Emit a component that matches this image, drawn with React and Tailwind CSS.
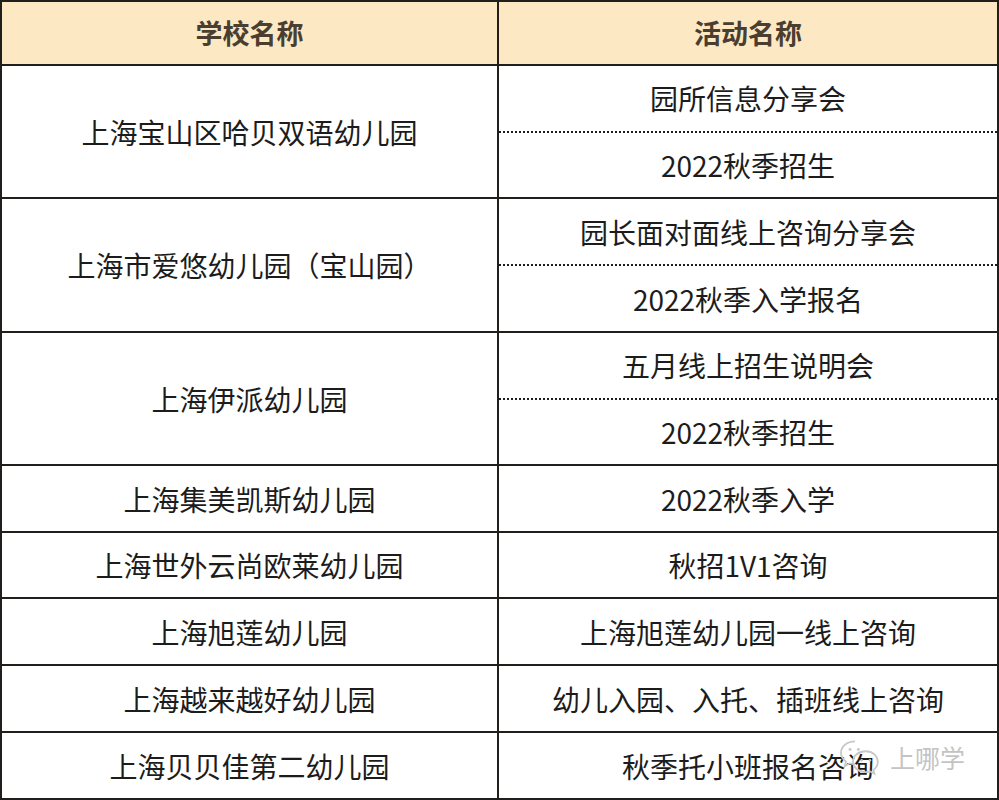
import React from 'react';

const GROUPS = [
  { school: '上海宝山区哈贝双语幼儿园', events: ['园所信息分享会', '2022秋季招生'], h: 'h-[133px]' },
  { school: '上海市爱悠幼儿园（宝山园）', events: ['园长面对面线上咨询分享会', '2022秋季入学报名'], h: 'h-[134px]' },
  { school: '上海伊派幼儿园', events: ['五月线上招生说明会', '2022秋季招生'], h: 'h-[133px]' },
  { school: '上海集美凯斯幼儿园', events: ['2022秋季入学'], h: 'h-[67px]' },
  { school: '上海世外云尚欧莱幼儿园', events: ['秋招1V1咨询'], h: 'h-[66px]' },
  { school: '上海旭莲幼儿园', events: ['上海旭莲幼儿园一线上咨询'], h: 'h-[67px]' },
  { school: '上海越来越好幼儿园', events: ['幼儿入园、入托、插班线上咨询'], h: 'h-[67px]' },
  { school: '上海贝贝佳第二幼儿园', events: ['秋季托小班报名咨询'], h: 'h-[67px]' },
];

function WechatMark() {
  return (
    <svg width="44" height="38" viewBox="0 0 52 46" fill="none" stroke="#c8c8c8" strokeWidth="2.2">
      {/* back bubble */}
      <path d="M20 4C10 4 3 10.5 3 18c0 4.3 2.3 8 6 10.5L7.5 34l6-3.2c2 .6 4.2.9 6.5.9" />
      {/* front bubble */}
      <path d="M33 16c-9 0-15.5 5.7-15.5 12.6S24 41.2 33 41.2c1.9 0 3.7-.3 5.4-.8l5 2.8-1.3-4.6c3.3-2.3 5.4-5.7 5.4-9.6C47.5 21.7 41.5 16 33 16z" />
      <circle cx="14" cy="14" r="1.8" fill="#c8c8c8" stroke="none" />
      <circle cx="24" cy="14" r="1.8" fill="#c8c8c8" stroke="none" />
      <circle cx="28" cy="27" r="1.6" fill="#c8c8c8" stroke="none" />
      <circle cx="38" cy="27" r="1.6" fill="#c8c8c8" stroke="none" />
    </svg>
  );
}

export default function App() {
  return (
    <div
      className="relative w-[999px] h-[800px] bg-white border-2 border-[#221e1b] flex flex-col text-[#1c1c1c]"
      style={{ fontFamily: '"Noto Sans CJK SC", "Noto Sans", sans-serif' }}
    >
      {/* Header */}
      <div className="flex h-[62px] bg-[#fde8c4] text-[#4a3e30] font-bold text-[27px]">
        <div className="w-[495px] flex items-center justify-center">学校名称</div>
        <div className="w-[2px] bg-[#221e1b]" />
        <div className="flex-1 flex items-center justify-center">活动名称</div>
      </div>

      {GROUPS.map((g) => (
        <div key={g.school} className={`flex border-t-2 border-[#221e1b] text-[28px] ${g.h}`}>
          <div className="w-[495px] flex items-center justify-center">{g.school}</div>
          <div className="w-[2px] bg-[#221e1b]" />
          <div className="flex-1 flex flex-col">
            {g.events.map((e, i) => (
              <div
                key={e + i}
                className={`flex-1 flex items-center justify-center ${i > 0 ? 'border-t-2 border-dotted border-[#1c1c1c]' : ''}`}
              >
                {e}
              </div>
            ))}
          </div>
        </div>
      ))}

      {/* Watermark */}
      <div className="absolute right-[32px] bottom-[22px] flex items-center gap-2 pointer-events-none">
        <WechatMark />
        <span className="text-[25px] leading-none text-[#c4c4c4]">上哪学</span>
      </div>
    </div>
  );
}
